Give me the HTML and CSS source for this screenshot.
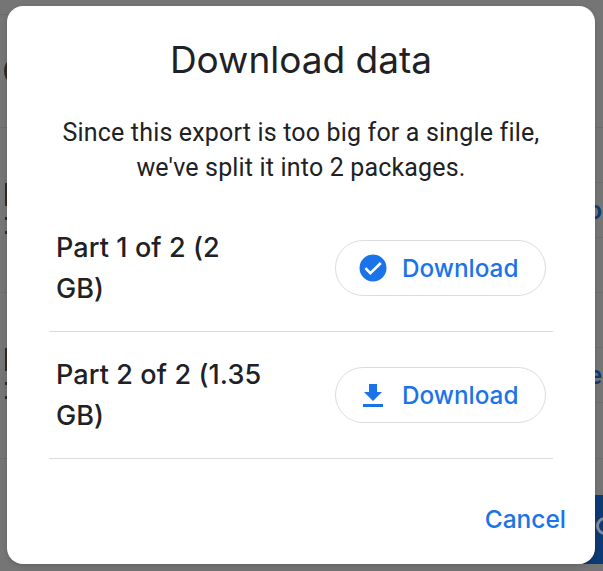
FILE: index.html
```html
<!DOCTYPE html>
<html lang="en">
<head>
    <meta charset="UTF-8">
    <title>Download data</title>
    <link rel="stylesheet" href="styles.css">
</head>
<body>

<!-- Page behind the dialog -->
<div class="backdrop">
    <div class="bg-left">
        <div class="bg-row h14"></div>
        <div class="bg-row h113"><span class="bg-curve"></span></div>
        <div class="bg-row h165"><span class="bg-stem"></span><span class="bg-dot"></span><span class="bg-dot"></span></div>
        <div class="bg-row h166"><span class="bg-stem"></span><span class="bg-dot"></span><span class="bg-dot"></span></div>
    </div>
    <div class="bg-right">
        <div class="bg-row h127"></div>
        <div class="bg-row h55"></div>
        <div class="bg-row h55 bg-link">o</div>
        <div class="bg-row h55"></div>
        <div class="bg-row h55"></div>
        <div class="bg-row h55 bg-link">e</div>
        <div class="bg-row h56"></div>
        <div class="bg-blue"><span class="bg-ring"></span></div>
    </div>
</div>

<div class="dialog">
    <h2>Download data</h2>
    <p class="intro">Since this export is too big for a single file,<br>we've split it into 2 packages.</p>

    <div class="part">
        <div class="part-name">Part 1 of 2 (2 GB)</div>
        <button class="dl-btn" type="button">
            <svg width="28" height="28" viewBox="0 0 28 28"><circle cx="14" cy="14" r="13.5" fill="#1a73e8"/><path fill="none" stroke="#fff" stroke-width="2.6" d="M6.4 14.2l5 5 10.4-10.2"/></svg>
            Download
        </button>
    </div>
    <div class="part">
        <div class="part-name">Part 2 of 2 (1.35 GB)</div>
        <button class="dl-btn" type="button">
            <svg width="28" height="28" viewBox="0 0 28 28"><path fill="#1a73e8" d="M18 11V3h-8v8H5l9 9 9-9h-5zM4 23v3h20v-3H4z"/></svg>
            Download
        </button>
    </div>

    <div class="actions">
        <button class="cancel" type="button">Cancel</button>
    </div>
</div>

</body>
</html>
```

FILE: styles.css
```css
html, body {
    margin: 0;
    padding: 0;
    height: 100%;
    overflow: hidden;
}
body {
    font-family: 'Roboto', sans-serif;
    background-color: #757575;
    color: #202124;
}

/* Page behind the dialog */
.backdrop {
    display: flex;
    width: 603px;
    height: 571px;
    overflow: hidden;
}
.bg-left {
    width: 60px;
}
.bg-right {
    flex: 1;
}
.bg-row {
    box-sizing: border-box;
    border-bottom: 1px solid #6c6c6c;
}
.h14 { height: 15px; }
.h113 { height: 113px; display: flex; align-items: center; }
.h127 { height: 128px; }
.h55 { height: 55px; }
.h56 { height: 56px; }
.h165 { height: 165px; padding-top: 55px; }
.h166 { height: 166px; padding-top: 55px; }
.bg-curve {
    display: block;
    width: 14px;
    height: 22px;
    margin-left: 4px;
    box-sizing: border-box;
    border: 3px solid #33291f;
    border-radius: 50%;
}
.bg-stem {
    display: block;
    width: 2px;
    height: 23px;
    margin-left: 5px;
    background-color: #33291f;
}
.bg-dot {
    display: block;
    width: 2px;
    height: 3px;
    margin: 11px 0 0 5px;
    background-color: #33291f;
}
.bg-link {
    padding-right: 1px;
    text-align: right;
    color: #0d3a74;
    font-size: 26px;
    font-weight: 500;
    line-height: 54px;
}
.bg-blue {
    box-sizing: border-box;
    width: 20px;
    height: 69px;
    margin-top: 36px;
    margin-left: auto;
    padding: 22px 0 0 13px;
    background-color: #0d3a74;
    overflow: hidden;
}
.bg-ring {
    display: block;
    width: 18px;
    height: 18px;
    box-sizing: border-box;
    border: 3px solid #838b96;
    border-radius: 50%;
}

.dialog {
    position: absolute;
    top: 6px;
    left: 7px;
    width: 588px;
    height: 558px;
    box-sizing: border-box;
    padding: 31px 29px 0 42px;
    background-color: #fff;
    border-radius: 16px;
    box-shadow: 0 2px 5px rgba(0, 0, 0, 0.15);
}
h2 {
    margin: 0 13px 0 0;
    font-family: 'Inter', sans-serif;
    font-size: 37px;
    font-weight: 400;
    line-height: 46px;
    text-align: center;
}
.intro {
    margin: 32px 13px 20px 0;
    font-size: 25px;
    letter-spacing: 0.17px;
    line-height: 35px;
    text-align: center;
}
.part {
    display: flex;
    align-items: center;
    justify-content: space-between;
    width: 504px;
    height: 127px;
    box-sizing: border-box;
    padding: 0 7px;
    border-bottom: 1px solid #dadce0;
}
.part-name {
    width: 210px;
    font-family: 'Inter', sans-serif;
    font-size: 27px;
    font-weight: 500;
    letter-spacing: 0.1px;
    line-height: 41px;
}
.dl-btn {
    display: flex;
    align-items: center;
    gap: 15px;
    width: 211px;
    height: 56px;
    padding: 0 0 0 23px;
    box-sizing: border-box;
    border: 1px solid #dadce0;
    border-radius: 28px;
    background-color: #fff;
    color: #1a73e8;
    font-family: 'Inter', sans-serif;
    font-size: 24.3px;
    font-weight: 500;
}
.actions {
    display: flex;
    justify-content: flex-end;
    margin-top: 45px;
}
.cancel {
    border: none;
    padding: 0;
    background: none;
    color: #1a73e8;
    font-family: 'Inter', sans-serif;
    font-size: 24.5px;
    font-weight: 500;
}
```
